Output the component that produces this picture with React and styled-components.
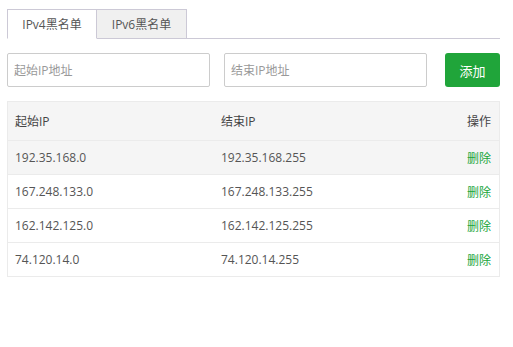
import React from "react";
import styled, { createGlobalStyle } from "styled-components";

const Global = createGlobalStyle`
  html, body { margin: 0; padding: 0; background: #fff; }
  body { font-family: "Microsoft YaHei", "Open Sans", "Noto Sans CJK SC", sans-serif; font-size: 12px; color: #555; }
  * { box-sizing: border-box; }
`;

const Page = styled.div`
  padding: 9px 13px 0 7px;
  width: 513px;
`;

const TabBar = styled.div`
  display: flex;
  height: 30px;
  border-bottom: 1px solid #ccc9d6;
`;

const Tab = styled.div`
  width: ${(p) => p.$w}px;
  display: flex;
  align-items: center;
  justify-content: center;
  font-size: 12px;
  color: #555;
  border: 1px solid #ccc9d6;
  border-left: ${(p) => (p.$first ? "1px solid #ccc9d6" : "none")};
  border-bottom: ${(p) => (p.$active ? "1px solid #fff" : "none")};
  background: ${(p) => (p.$active ? "#fff" : "#f0f0f0")};
  margin-bottom: ${(p) => (p.$active ? "-1px" : "0")};
  height: ${(p) => (p.$active ? "30px" : "29px")};
`;

const Form = styled.div`
  display: flex;
  align-items: center;
  margin-top: 14px;
`;

const Input = styled.input`
  width: 203px;
  height: 34px;
  border: 1px solid #ccc;
  border-radius: 2px;
  padding: 0 6px;
  font-family: inherit;
  font-size: 12px;
  color: #555;
  margin-right: ${(p) => p.$mr}px;
  outline: none;
  &::placeholder { color: #999; }
`;

const Button = styled.button`
  width: 55px;
  height: 34px;
  background: #20a53a;
  border: none;
  border-radius: 3px;
  color: #fff;
  font-family: inherit;
  font-size: 13px;
`;

const Table = styled.div`
  margin-top: 14px;
  border: 1px solid #ebebeb;
  width: 493px;
`;

const Row = styled.div`
  display: grid;
  grid-template-columns: 206px 1fr 80px;
  align-items: center;
  height: ${(p) => (p.$head ? 38 : 34)}px;
  padding: 0 8px 0 7px;
  background: ${(p) => (p.$bg ? "#f5f5f5" : "#fff")};
  border-top: ${(p) => (p.$head ? "none" : "1px solid #ebebeb")};
  color: ${(p) => (p.$head ? "#444" : "#555")};
`;

const Cell = styled.div`
  text-align: ${(p) => (p.$right ? "right" : "left")};
  white-space: nowrap;
`;

const Del = styled.span`
  color: #20a53a;
  cursor: pointer;
`;

const rows = [
  ["192.35.168.0", "192.35.168.255"],
  ["167.248.133.0", "167.248.133.255"],
  ["162.142.125.0", "162.142.125.255"],
  ["74.120.14.0", "74.120.14.255"],
];

export default function App() {
  return (
    <Page>
      <Global />
      <TabBar>
        <Tab $w={90} $first $active>IPv4黑名单</Tab>
        <Tab $w={90}>IPv6黑名单</Tab>
      </TabBar>
      <Form>
        <Input placeholder="起始IP地址" $mr={14} />
        <Input placeholder="结束IP地址" $mr={18} />
        <Button>添加</Button>
      </Form>
      <Table>
        <Row $head $bg>
          <Cell>起始IP</Cell>
          <Cell>结束IP</Cell>
          <Cell $right>操作</Cell>
        </Row>
        {rows.map((r, i) => (
          <Row key={i} $bg={i === 0}>
            <Cell>{r[0]}</Cell>
            <Cell>{r[1]}</Cell>
            <Cell $right><Del>删除</Del></Cell>
          </Row>
        ))}
      </Table>
    </Page>
  );
}
